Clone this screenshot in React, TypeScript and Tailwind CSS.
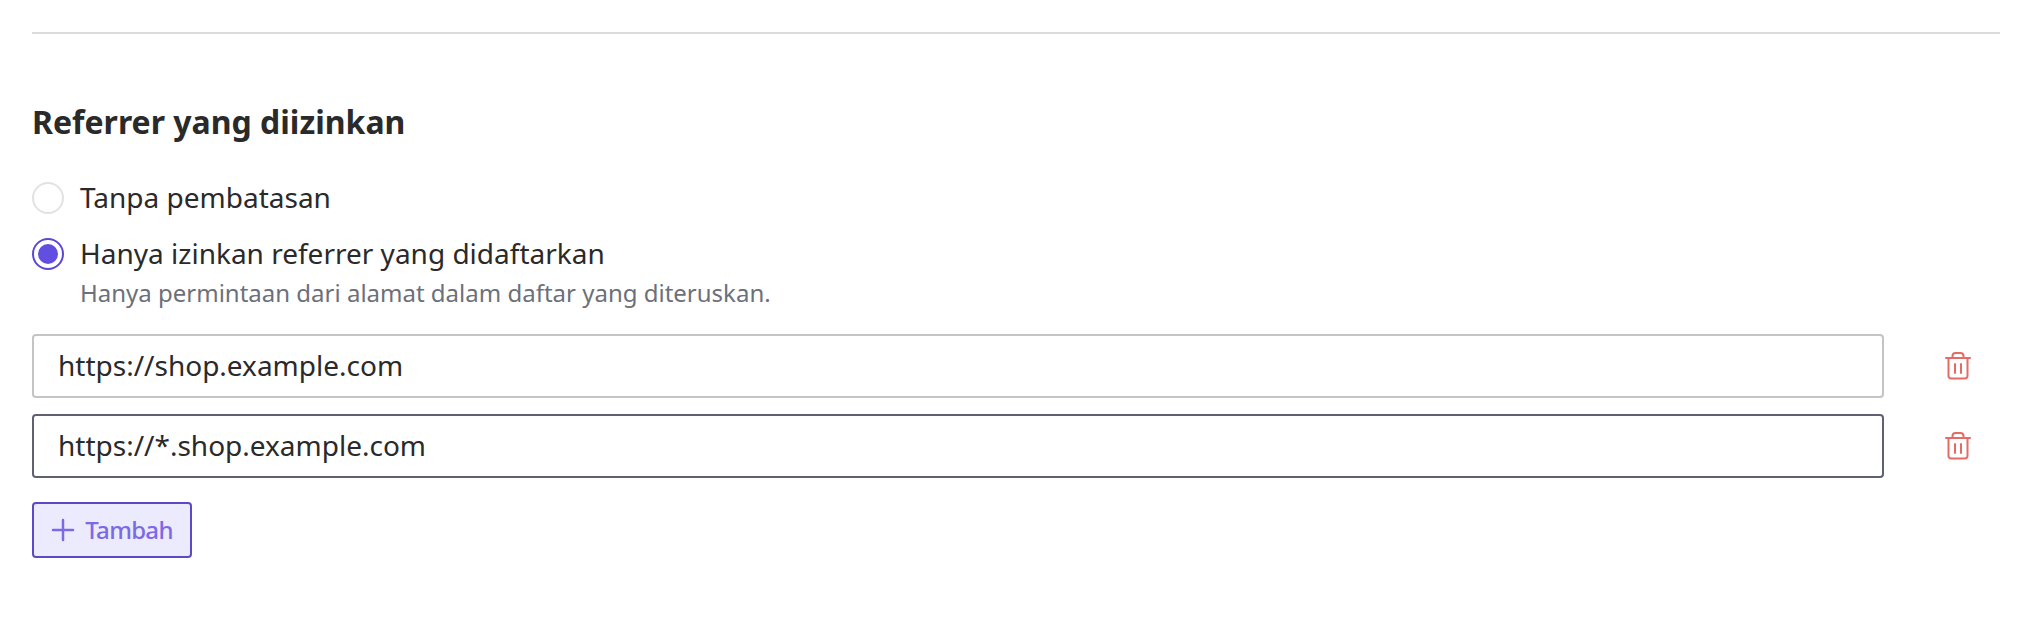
const font = { fontFamily: '"Noto Sans", sans-serif' };

function TrashIcon() {
  return (
    <svg width="32" height="32" viewBox="0 0 32 32" fill="none" stroke="#e56b63" strokeWidth="2" strokeLinejoin="round" strokeLinecap="round">
      <path d="M4 8h24" />
      <path d="M6.500 8v18a2.500 2.500 0 0 0 2.500 2.500h14a2.500 2.500 0 0 0 2.500-2.500V8" />
      <path d="M10.500 8V6a3 3 0 0 1 3-3h5a3 3 0 0 1 3 3v2" />
      <path d="M13 14v9M19 14v9" />
    </svg>
  );
}

function UrlRow({ value, focused }: { value: string; focused?: boolean }) {
  return (
    <div className="flex items-center">
      <div
        className={`flex h-[64px] w-[1852px] items-center rounded-[4px] border-2 bg-white px-[24px] pb-[2px] text-[28px] text-[#2a2a2a] ${
          focused ? "border-[#5f6072]" : "border-[#c4c4c4]"
        }`}
      >
        {value}
      </div>
      <button className="ml-[58px] flex h-[32px] w-[32px] items-center justify-center">
        <TrashIcon />
      </button>
    </div>
  );
}

export default function App() {
  return (
    <div className="h-[630px] w-[2032px] overflow-hidden bg-white px-[32px] pt-[32px]" style={font}>
      <div className="h-[2px] w-[1968px] bg-[#dcdcdc]" />
      <h2 className="mt-[66px] text-[32px] font-bold leading-[44px] text-[#2a2a2a]">Referrer yang diizinkan</h2>

      <div className="mt-[34px] flex items-center gap-[16px]">
        <span className="h-[32px] w-[32px] rounded-full border-2 border-[#e2e2e2] bg-white" />
        <span className="pb-[2px] text-[28px] leading-[38px] text-[#2a2a2a]">Tanpa pembatasan</span>
      </div>

      <div className="mt-[16px] flex items-center gap-[16px]">
        <span className="flex h-[32px] w-[32px] items-center justify-center rounded-full border-2 border-[#5b49d6] bg-white">
          <span className="h-[20px] w-[20px] rounded-full bg-[#624ee0]" />
        </span>
        <span className="pb-[2px] text-[28px] leading-[38px] text-[#2a2a2a]">Hanya izinkan referrer yang didaftarkan</span>
      </div>
      <p className="ml-[48px] mt-[1px] text-[24px] leading-[36px] text-[#6c707a]">
        Hanya permintaan dari alamat dalam daftar yang diteruskan.
      </p>

      <div className="mt-[23px] flex flex-col gap-[16px]">
        <UrlRow value="https://shop.example.com" />
        <UrlRow value="https://*.shop.example.com" focused />
      </div>

      <button className="mt-[24px] flex h-[56px] w-[160px] items-center justify-center gap-[10px] rounded-[4px] border-2 border-[#5b49c8] bg-[#ecebfd] text-[24px] font-medium text-[#7a6ae6]">
        <svg className="shrink-0" width="24" height="24" viewBox="0 0 24 24" fill="none" stroke="#7a6ae6" strokeWidth="2.500" strokeLinecap="round">
          <path d="M12 2v20M2 12h20" />
        </svg>
        <span className="tracking-[-0.7px]">Tambah</span>
      </button>
    </div>
  );
}
